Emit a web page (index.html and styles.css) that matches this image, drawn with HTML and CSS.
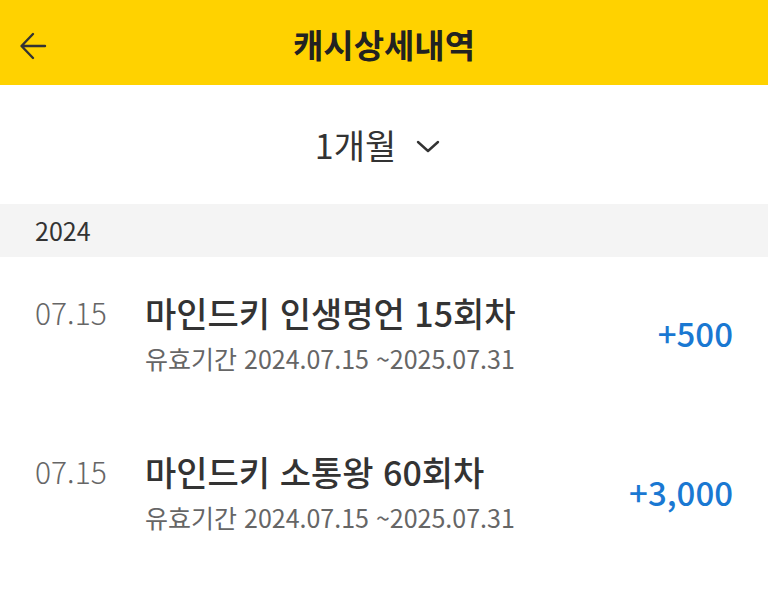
FILE: index.html
```html
<!DOCTYPE html>
<html lang="ko">
<head>
<meta charset="utf-8">
<link rel="stylesheet" href="styles.css">
</head>
<body>
<header class="topbar">
  <button class="back" aria-label="뒤로">
    <svg width="28" height="30" viewBox="0 0 28 30"><path d="M26 15H3M14 3L2.5 15L14 27" fill="none" stroke="#333" stroke-width="2.4" stroke-linecap="round" stroke-linejoin="round"/></svg>
  </button>
  <h1 class="title">캐시상세내역</h1>
</header>
<div class="filter">
  <span class="period">1개월</span>
  <svg class="chev" width="24" height="13" viewBox="0 0 24 13"><path d="M2 2L12 11L22 2" fill="none" stroke="#333" stroke-width="2.4" stroke-linecap="round" stroke-linejoin="round"/></svg>
</div>
<div class="year">2024</div>
<ul class="list">
  <li class="item">
    <span class="date">07.15</span>
    <div class="main">
      <div class="name">마인드키 인생명언 15회차</div>
      <div class="valid">유효기간 2024.07.15 ~2025.07.31</div>
    </div>
    <span class="amount">+500</span>
  </li>
  <li class="item">
    <span class="date">07.15</span>
    <div class="main">
      <div class="name">마인드키 소통왕 60회차</div>
      <div class="valid">유효기간 2024.07.15 ~2025.07.31</div>
    </div>
    <span class="amount">+3,000</span>
  </li>
</ul>
</body>
</html>
```
FILE: styles.css
```css
* { box-sizing: border-box; }
body {
  margin: 0;
  background: #fff;
  font-family: "Noto Sans CJK KR", "Noto Sans", sans-serif;
  color: #333;
}
.topbar {
  height: 85px;
  background: #FFD200;
  display: flex;
  align-items: center;
  justify-content: center;
  position: relative;
}
.back {
  position: absolute;
  left: 19px;
  top: 31px;
  padding: 0;
  border: 0;
  background: none;
  display: flex;
}
.title {
  margin: 0;
  font-size: 33px;
  font-weight: 700;
  color: #222;
  line-height: 40px;
  padding-top: 2px;
}
.filter {
  height: 119px;
  display: flex;
  align-items: center;
  justify-content: center;
  gap: 20px;
  padding-right: 13px;
}
.period {
  font-size: 34px;
  line-height: 44px;
  color: #333;
}
.chev { margin-top: 4px; }
.year {
  height: 53px;
  background: #f4f4f4;
  padding-left: 35px;
  font-size: 25px;
  line-height: 53px;
  color: #333;
}
.list { list-style: none; margin: 0; padding: 0; }
.item {
  display: flex;
  align-items: center;
  padding: 35px 35px 42px 35px;
  height: 159px;
}
.date {
  align-self: flex-start;
  width: 110px;
  flex: none;
  font-size: 30px;
  line-height: 40px;
  font-weight: 300;
  color: #666;
}
.main { flex: 1; display: flex; flex-direction: column; gap: 9px; }
.name {
  font-size: 34px;
  line-height: 40px;
  font-weight: 500;
  color: #333;
}
.valid {
  font-size: 25px;
  line-height: 32px;
  color: #666;
}
.amount {
  font-size: 33px;
  line-height: 40px;
  font-weight: 500;
  color: #1a78d2;
}
```
